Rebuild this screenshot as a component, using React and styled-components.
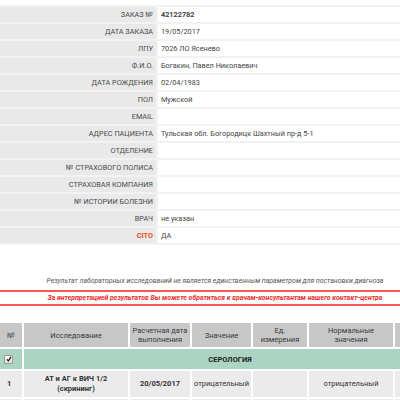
import React from 'react';
import styled, { createGlobalStyle } from 'styled-components';

const GlobalStyle = createGlobalStyle`
  html, body {
    margin: 0;
    padding: 0;
    background: #fff;
    overflow: hidden;
  }
  body {
    font-family: Roboto, "Liberation Sans", Arial, sans-serif;
    color: #444;
  }
`;

const Page = styled.div`
  width: 436px;
`;

const InfoGrid = styled.div`
  margin-top: 5px;
  display: grid;
  grid-template-columns: 156px 1fr;
  grid-auto-rows: 15px;
  gap: 2px;
  padding: 2px 0;
  background: #f2f2f2;
`;

const Label = styled.div`
  background: #e9e9e9;
  display: flex;
  align-items: center;
  justify-content: flex-end;
  padding-right: 3px;
  font-size: 7.3px;
  text-transform: uppercase;
  color: ${(p) => (p.$accent ? '#ec4a1d' : '#4a4a4a')};
  font-weight: ${(p) => (p.$accent ? 700 : 400)};
  white-space: nowrap;
`;

const Value = styled.div`
  background: #fff;
  display: flex;
  align-items: center;
  padding-left: 3px;
  font-size: 7.3px;
  color: #444;
  font-weight: ${(p) => (p.$bold ? 700 : 400)};
  white-space: nowrap;
`;

const Notice = styled.div`
  width: 430px;
  margin-top: 31px;
`;

const Note = styled.p`
  margin: 0 0 4px;
  text-align: center;
  font-size: 6.9px;
  line-height: 10px;
  font-style: italic;
  color: #555;
  white-space: nowrap;
`;

const Warning = styled.p`
  margin: 0;
  border-top: 2px solid #ff5555;
  border-bottom: 2px solid #ff5555;
  height: 12px;
  line-height: 12px;
  text-align: center;
  font-size: 6.9px;
  font-style: italic;
  font-weight: 700;
  color: #f22b2b;
  white-space: nowrap;
`;

const Results = styled.div`
  margin-top: 17px;
  display: grid;
  grid-template-columns: 22px 104px 60px 59px 54px 84px 41px;
  grid-template-rows: 24px 20px 26px 26px;
  gap: 2px;
  background: #fff;
`;

const HeadCell = styled.div`
  background: #c7c7c7;
  display: flex;
  align-items: center;
  justify-content: center;
  text-align: center;
  font-size: 7.5px;
  line-height: 9px;
  color: #3a3a3a;
  overflow: hidden;
`;

const GroupCell = styled.div`
  background: #acd4c2;
  display: flex;
  align-items: center;
  justify-content: ${(p) => (p.$wide ? 'center' : 'flex-start')};
  padding-left: ${(p) => (p.$wide ? 0 : 4)}px;
  grid-column: ${(p) => (p.$wide ? '2 / -1' : 'auto')};
  font-size: 7.5px;
  font-weight: 700;
  color: #222;
`;

const Cell = styled.div`
  background: #ebebeb;
  display: flex;
  align-items: center;
  justify-content: ${(p) => (p.$left ? 'flex-start' : 'center')};
  padding-left: ${(p) => (p.$left ? 7 : 0)}px;
  text-align: center;
  font-size: 7.5px;
  line-height: 10px;
  color: #333;
  font-weight: ${(p) => (p.$bold ? 700 : 400)};
  white-space: nowrap;
  overflow: hidden;
`;

const CheckBox = styled.span`
  width: 7px;
  height: 7px;
  border: 1px solid #9a9a9a;
  border-radius: 1px;
  background: linear-gradient(#ffffff, #dcdcdc);
  display: flex;
  align-items: center;
  justify-content: center;
`;

const info = [
  ['Заказ №', '42122782', true],
  ['Дата заказа', '19/05/2017'],
  ['ЛПУ', '7026 ЛО Ясенево'],
  ['Ф.И.О.', 'Богакин, Павел Николаевич'],
  ['Дата рождения', '02/04/1983'],
  ['Пол', 'Мужской'],
  ['Email', ''],
  ['Адрес пациента', 'Тульская обл. Богородицк Шахтный пр-д 5-1'],
  ['Отделение', ''],
  ['№ страхового полиса', ''],
  ['Страховая компания', ''],
  ['№ истории болезни', ''],
  ['Врач', 'не указан'],
];

const rows = [
  {
    n: '1',
    name: ['АТ и АГ к ВИЧ 1/2', '(скрининг)'],
    date: '20/05/2017',
    value: 'отрицательный',
    unit: '',
    norm: 'отрицательный',
    status: 'выполнен',
  },
  {
    n: '2',
    name: ['Гепатит С (IgG/IgM)', ''],
    date: '20/05/2017',
    value: 'отрицательный',
    unit: '',
    norm: 'отрицательный',
    status: 'выполнен',
  },
];

export default function App() {
  return (
    <Page>
      <GlobalStyle />
      <InfoGrid>
        {info.map(([label, value, bold]) => (
          <React.Fragment key={label}>
            <Label>{label}</Label>
            <Value $bold={bold}>{value}</Value>
          </React.Fragment>
        ))}
        <Label $accent>Cito</Label>
        <Value>ДА</Value>
      </InfoGrid>

      <Notice>
        <Note>
          Результат лабораторных исследований не является единственным параметром для постановки диагноза
        </Note>
        <Warning>
          За интерпретацией результатов Вы можете обратиться к врачам-консультантам нашего контакт-центра
        </Warning>
      </Notice>

      <Results>
        <HeadCell>№</HeadCell>
        <HeadCell>Исследование</HeadCell>
        <HeadCell>Расчетная дата<br />выполнения</HeadCell>
        <HeadCell>Значение</HeadCell>
        <HeadCell>Ед.<br />измерения</HeadCell>
        <HeadCell>Нормальные<br />значения</HeadCell>
        <HeadCell>Статус</HeadCell>

        <GroupCell>
          <CheckBox>
            <svg width="6" height="6" viewBox="0 0 10 10">
              <path d="M1.5 5.5 L4 8 L8.5 1.5" fill="none" stroke="#111" strokeWidth="2" />
            </svg>
          </CheckBox>
        </GroupCell>
        <GroupCell $wide>СЕРОЛОГИЯ</GroupCell>

        {rows.map((r) => (
          <React.Fragment key={r.n}>
            <Cell $left $bold>{r.n}</Cell>
            <Cell $bold>
              <span>
                {r.name[0]}
                {r.name[1] && <br />}
                {r.name[1]}
              </span>
            </Cell>
            <Cell $bold>{r.date}</Cell>
            <Cell>{r.value}</Cell>
            <Cell>{r.unit}</Cell>
            <Cell>{r.norm}</Cell>
            <Cell $left>{r.status}</Cell>
          </React.Fragment>
        ))}
      </Results>
    </Page>
  );
}
